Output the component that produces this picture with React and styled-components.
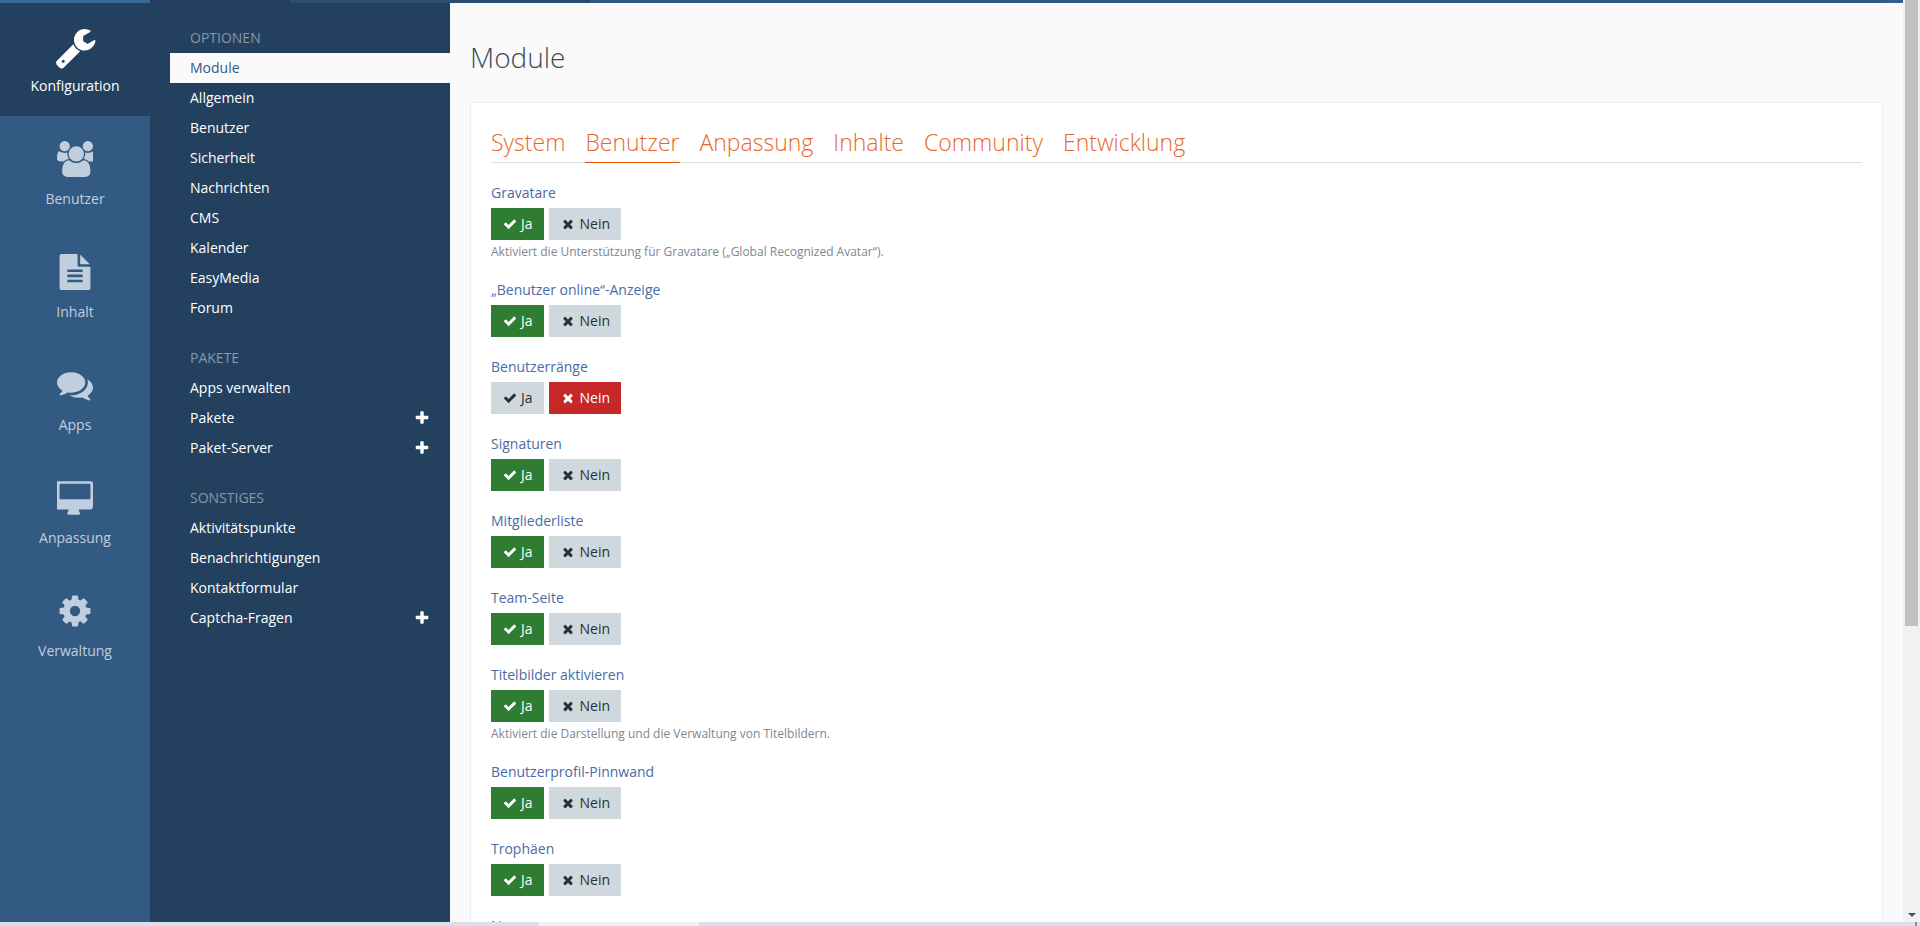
import React from 'react';
import styled, { createGlobalStyle } from 'styled-components';

const icons = {
  wrench:
    'M448 1472q0-26-19-45t-45-19-45 19-19 45 19 45 45 19 45-19 19-45zm644-420l-682 682q-37 37-90 37-52 0-91-37l-106-108q-38-36-38-90 0-53 38-91l681-681q39 98 114.5 173.5t173.5 114.5zm634-435q0 39-23 106-47 134-164.5 217.5t-258.5 83.5q-185 0-316.5-131.5t-131.5-316.5 131.5-316.5 316.5-131.5q58 0 121.5 16.5t107.5 46.5q16 11 16 28t-16 28l-293 169v224l193 107q5-3 79-48.5t135.5-81 70.5-35.5q15 0 23.5 10t8.5 25z',
  users:
    'M593 896q-162 5-265 128h-134q-82 0-138-40.5t-56-118.5q0-353 124-353 6 0 43.5 21t97.5 42.5 119 21.5q67 0 133-23-5 37-5 66 0 139 81 256zm1071 637q0 120-73 189.5t-194 69.5h-874q-121 0-194-69.5t-73-189.5q0-53 3.5-103.5t14-109 26.5-108.5 43-97.5 62-81 85.5-53.5 111.5-20q10 0 43 21.5t73 48 107 48 135 21.5 135-21.5 107-48 73-48 43-21.5q61 0 111.5 20t85.5 53.5 62 81 43 97.5 26.5 108.5 14 109 3.5 103.5zm-1024-1277q0 106-75 181t-181 75-181-75-75-181 75-181 181-75 181 75 75 181zm704 384q0 159-112.5 271.5t-271.5 112.5-271.5-112.5-112.5-271.5 112.5-271.5 271.5-112.5 271.5 112.5 112.5 271.5zm576 225q0 78-56 118.5t-138 40.5h-134q-103-123-265-128 81-117 81-256 0-29-5-66 66 23 133 23 59 0 119-21.5t97.5-42.5 43.5-21q124 0 124 353zm-128-609q0 106-75 181t-181 75-181-75-75-181 75-181 181-75 181 75 75 181z',
  file:
    'M1596 476q14 14 28 36h-472v-472q22 14 36 28zm-476 164h544v1056q0 40-28 68t-68 28h-1344q-40 0-68-28t-28-68v-1600q0-40 28-68t68-28h800v544q0 40 28 68t68 28zm160 736v-64q0-14-9-23t-23-9h-704q-14 0-23 9t-9 23v64q0 14 9 23t23 9h704q14 0 23-9t9-23zm0-256v-64q0-14-9-23t-23-9h-704q-14 0-23 9t-9 23v64q0 14 9 23t23 9h704q14 0 23-9t9-23zm0-256v-64q0-14-9-23t-23-9h-704q-14 0-23 9t-9 23v64q0 14 9 23t23 9h704q14 0 23-9t9-23z',
  comments:
    'M1408 768q0 139-94 257t-256.5 186.5-353.5 68.5q-86 0-176-16-124 88-278 128-36 9-86 16h-3q-11 0-20.5-8t-11.5-21q-1-3-1-6.5t.5-6.5 2-6l2.5-5 3.5-5.5 4-5 4.5-5 4-4.5q5-6 23-25t26-29.5 22.5-29 25-38.5 20.5-44q-124-72-195-177t-71-224q0-139 94-257t256.5-186.5 353.5-68.5 353.5 68.5 256.5 186.5 94 257zm384 256q0 120-71 224.5t-195 176.5q10 24 20.5 44t25 38.5 22.5 29 26 29.5 23 25q1 1 4 4.5t4.5 5 4 5 3.5 5.5l2.5 5 2 6 .5 6.5-1 6.5q-3 14-13 22t-22 7q-50-7-86-16-154-40-278-128-90 16-176 16-271 0-472-132 58 4 88 4 161 0 309-45t264-129q125-92 192-212t67-254q0-77-23-152 129 71 204 178t75 230z',
  desktop:
    'M1664 928v-704q0-13-9.5-22.5t-22.5-9.5h-1472q-13 0-22.5 9.5t-9.5 22.5v704q0 13 9.5 22.5t22.5 9.5h1472q13 0 22.5-9.5t9.5-22.5zm128-704v1088q0 66-47 113t-113 47h-544q0 37 16 77.5t32 71 16 43.5q0 26-19 45t-45 19h-512q-26 0-45-19t-19-45q0-14 16-44t32-70 16-78h-544q-66 0-113-47t-47-113v-1088q0-66 47-113t113-47h1632q66 0 113 47t47 113z',
  cog:
    'M1152 896q0-106-75-181t-181-75-181 75-75 181 75 181 181 75 181-75 75-181zm512-109v222q0 12-8 23t-20 13l-185 28q-19 54-39 91 35 50 107 138 10 12 10 25t-9 23q-27 37-99 108t-94 71q-12 0-26-9l-138-108q-44 23-91 38-16 136-29 186-7 28-36 28h-222q-14 0-24.5-8.5t-11.5-21.5l-28-184q-49-16-90-37l-141 107q-10 9-25 9-14 0-25-11-126-114-165-168-7-10-7-23 0-12 8-23 15-21 51-66.5t54-70.5q-27-50-41-99l-183-27q-13-2-21-12.5t-8-23.5v-222q0-12 8-23t19-13l186-28q14-46 39-92-40-57-107-138-10-12-10-24 0-10 9-23 26-36 98.5-107.5t94.5-71.5q13 0 26 10l138 107q44-23 91-38 16-136 29-186 7-28 36-28h222q14 0 24.5 8.5t11.5 21.5l28 184q49 16 90 37l142-107q9-9 24-9 13 0 25 10 129 119 165 170 7 8 7 22 0 12-8 23-15 21-51 66.5t-54 70.5q26 50 41 98l183 28q13 2 21 12.5t8 23.5z',
  check:
    'M1671 566q0 40-28 68l-724 724-136 136q-28 28-68 28t-68-28l-136-136-362-362q-28-28-28-68t28-68l136-136q28-28 68-28t68 28l294 295 656-657q28-28 68-28t68 28l136 136q28 28 28 68z',
  times:
    'M1490 1322q0 40-28 68l-136 136q-28 28-68 28t-68-28l-294-294-294 294q-28 28-68 28t-68-28l-136-136q-28-28-28-68t28-68l294-294-294-294q-28-28-28-68t28-68l136-136q28-28 68-28t68 28l294 294 294-294q28-28 68-28t68 28l136 136q28 28 28 68t-28 68l-294 294 294 294q28 28 28 68z',
  plus:
    'M1600 736v192q0 40-28 68t-68 28h-416v416q0 40-28 68t-68 28h-192q-40 0-68-28t-28-68v-416h-416q-40 0-68-28t-28-68v-192q0-40 28-68t68-28h416v-416q0-40 28-68t68-28h192q40 0 68 28t28 68v416h416q40 0 68 28t28 68z',
};

const Icon = ({ name, size }) => (
  <svg width={size} height={size} viewBox="0 0 1792 1792" fill="currentColor">
    <path d={icons[name]} />
  </svg>
);

const mainNav = [
  { label: 'Konfiguration', icon: 'wrench', active: true },
  { label: 'Benutzer', icon: 'users' },
  { label: 'Inhalt', icon: 'file' },
  { label: 'Apps', icon: 'comments' },
  { label: 'Anpassung', icon: 'desktop' },
  { label: 'Verwaltung', icon: 'cog' },
];

const subNav = [
  {
    title: 'OPTIONEN',
    items: [
      { label: 'Module', active: true },
      { label: 'Allgemein' },
      { label: 'Benutzer' },
      { label: 'Sicherheit' },
      { label: 'Nachrichten' },
      { label: 'CMS' },
      { label: 'Kalender' },
      { label: 'EasyMedia' },
      { label: 'Forum' },
    ],
  },
  {
    title: 'PAKETE',
    items: [
      { label: 'Apps verwalten' },
      { label: 'Pakete', add: true },
      { label: 'Paket-Server', add: true },
    ],
  },
  {
    title: 'SONSTIGES',
    items: [
      { label: 'Aktivitätspunkte' },
      { label: 'Benachrichtigungen' },
      { label: 'Kontaktformular' },
      { label: 'Captcha-Fragen', add: true },
    ],
  },
];

const tabs = ['System', 'Benutzer', 'Anpassung', 'Inhalte', 'Community', 'Entwicklung'];

const options = [
  { label: 'Gravatare', on: true, help: 'Aktiviert die Unterstützung für Gravatare („Global Recognized Avatar“).' },
  { label: '„Benutzer online“-Anzeige', on: true },
  { label: 'Benutzerränge', on: false },
  { label: 'Signaturen', on: true },
  { label: 'Mitgliederliste', on: true },
  { label: 'Team-Seite', on: true },
  { label: 'Titelbilder aktivieren', on: true, help: 'Aktiviert die Darstellung und die Verwaltung von Titelbildern.' },
  { label: 'Benutzerprofil-Pinnwand', on: true },
  { label: 'Trophäen', on: true },
  { label: 'Namen', on: true },
];

const App = () => (
  <>
    <GlobalStyle />
    <Page>
      <Main>
        <Viewport>
          <TopStrip>
            <StripPart $width={150} $color="#3a6a98" />
            <StripPart $width={140} $color="#254060" />
            <StripPart $width={160} $color="#2b4e72" />
            <StripPart $width={140} $color="#264d72" />
            <StripPart $grow $color="#2f5a82" />
            <StripPart $width={20} $color="#335f8e" />
          </TopStrip>
          <Panels>
            <MainNav>
              {mainNav.map((item) => (
                <MainNavItem key={item.label} $active={item.active}>
                  <MainNavIcon $active={item.active}>
                    <Icon name={item.icon} size={item.active ? 43 : 36} />
                  </MainNavIcon>
                  {item.label}
                </MainNavItem>
              ))}
            </MainNav>

            <SubNav>
              {subNav.map((section) => (
                <SubSection key={section.title}>
                  <SubTitle>{section.title}</SubTitle>
                  {section.items.map((item) => (
                    <SubItem key={item.label} $active={item.active}>
                      {item.label}
                      {item.add && <Icon name="plus" size={16} />}
                    </SubItem>
                  ))}
                </SubSection>
              ))}
            </SubNav>

            <Content>
              <PageTitle>Module</PageTitle>
              <Card>
                <TabBar>
                  {tabs.map((tab) => (
                    <Tab key={tab} $active={tab === 'Benutzer'}>
                      {tab}
                    </Tab>
                  ))}
                </TabBar>
                {options.map((option) => (
                  <Option key={option.label}>
                    <OptionLabel>{option.label}</OptionLabel>
                    <Toggle>
                      <YesButton $variant={option.on ? 'yes' : 'off'}>
                        <Icon name="check" size={14} />
                        Ja
                      </YesButton>
                      <NoButton $variant={option.on ? 'off' : 'no'}>
                        <Icon name="times" size={14} />
                        Nein
                      </NoButton>
                    </Toggle>
                    {option.help && <Help>{option.help}</Help>}
                  </Option>
                ))}
              </Card>
            </Content>
          </Panels>
        </Viewport>
        <Scrollbar>
          <ScrollThumb />
          <ScrollArrow />
        </Scrollbar>
      </Main>
      <BottomStrip>
        <BottomPart $width={539} $color="#d9dfee" />
        <BottomPart $width={160} $color="#eef0f8" />
        <BottomPart $width={1216} $color="#d9dfee" />
        <BottomPart $width={2} $color="#8a8f9c" />
        <BottomPart $width={3} $color="#d9dfee" />
      </BottomStrip>
    </Page>
  </>
);

const GlobalStyle = createGlobalStyle`
  html, body {
    margin: 0;
    padding: 0;
    height: 100%;
    overflow: hidden;
  }
  body {
    font-family: "Open Sans", "Liberation Sans", sans-serif;
    font-size: 14px;
  }
`;

const Page = styled.div`
  display: flex;
  flex-direction: column;
  height: 926px;
  overflow: hidden;
`;

const Main = styled.div`
  display: flex;
  flex: 1;
  min-height: 0;
`;

const Viewport = styled.div`
  display: flex;
  flex-direction: column;
  flex: 1;
  min-width: 0;
`;

const TopStrip = styled.div`
  display: flex;
  height: 3px;
  flex-shrink: 0;
`;

const StripPart = styled.div`
  width: ${(p) => (p.$width ? `${p.$width}px` : 'auto')};
  flex: ${(p) => (p.$grow ? 1 : 'none')};
  background: ${(p) => p.$color};
`;

const Panels = styled.div`
  display: flex;
  flex: 1;
  min-height: 0;
`;

const MainNav = styled.nav`
  width: 150px;
  flex-shrink: 0;
  background: #335a82;
`;

const MainNavItem = styled.div`
  display: flex;
  flex-direction: column;
  align-items: center;
  height: 113px;
  padding-top: ${(p) => (p.$active ? '23px' : '25px')};
  box-sizing: border-box;
  line-height: 20px;
  background: ${(p) => (p.$active ? '#24405f' : 'transparent')};
  color: ${(p) => (p.$active ? '#fff' : '#c0cedd')};
`;

const MainNavIcon = styled.div`
  display: flex;
  justify-content: center;
  margin-bottom: ${(p) => (p.$active ? '7px' : '12px')};
  svg {
    display: block;
  }
`;

const SubNav = styled.nav`
  width: 300px;
  flex-shrink: 0;
  box-sizing: border-box;
  padding: 20px 0 0 20px;
  background: #24405f;
`;

const SubSection = styled.div`
  margin-bottom: 20px;
`;

const SubTitle = styled.div`
  height: 30px;
  padding-left: 20px;
  line-height: 30px;
  color: #8797aa;
`;

const SubItem = styled.div`
  display: flex;
  align-items: center;
  justify-content: space-between;
  height: 30px;
  padding: 0 20px;
  line-height: 30px;
  background: ${(p) => (p.$active ? '#fafafa' : 'transparent')};
  color: ${(p) => (p.$active ? '#335a82' : '#fff')};
`;

const Content = styled.main`
  flex: 1;
  min-width: 0;
  padding: 0 20px;
  overflow: hidden;
  background: #fafafa;
`;

const PageTitle = styled.h1`
  margin: 34px 0 24px;
  font-family: "Open Sans Light", "Open Sans", sans-serif;
  font-size: 28px;
  font-weight: 300;
  line-height: 41px;
  color: #3c4d56;
`;

const Card = styled.section`
  padding: 20px;
  border: 1px solid #e8eff5;
  background: #fff;
`;

const TabBar = styled.div`
  display: flex;
  gap: 20px;
  margin-bottom: 20px;
  border-bottom: 1px solid #e0e0e0;
`;

const Tab = styled.div`
  margin-bottom: -1px;
  padding: 1px 0 1px;
  font-family: "Open Sans Light", "Open Sans", sans-serif;
  font-size: 23px;
  font-weight: 300;
  line-height: 37px;
  color: #e8662a;
  border-bottom: 1px solid ${(p) => (p.$active ? '#e65100' : 'transparent')};
`;

const Option = styled.div`
  margin-bottom: 20px;
`;

const OptionLabel = styled.div`
  margin-bottom: 5px;
  line-height: 20px;
  color: #4a6ba5;
`;

const Toggle = styled.div`
  display: flex;
  gap: 5px;
`;

const toggleColors = {
  yes: 'background: #2e7d32; color: #fff;',
  no: 'background: #c62828; color: #fff;',
  off: 'background: #cfd8dc; color: #263238;',
};

const YesButton = styled.div`
  display: flex;
  align-items: center;
  gap: 4px;
  height: 32px;
  padding: 0 11px 0 12px;
  line-height: 30px;
  ${(p) => toggleColors[p.$variant]}
`;

const NoButton = styled(YesButton)`
  gap: 5px;
  padding: 0 11px 0 12px;
`;

const Help = styled.div`
  margin-top: 3px;
  font-size: 12px;
  line-height: 17px;
  color: #7d8790;
`;

const Scrollbar = styled.div`
  position: relative;
  width: 17px;
  flex-shrink: 0;
  background: #f1f1f1;
`;

const ScrollThumb = styled.div`
  width: 13px;
  height: 626px;
  margin-left: 2px;
  background: #c1c1c1;
`;

const ScrollArrow = styled.div`
  position: absolute;
  bottom: 5px;
  left: 5px;
  width: 0;
  height: 0;
  border-left: 4px solid transparent;
  border-right: 4px solid transparent;
  border-top: 4px solid #505050;
`;

const BottomStrip = styled.div`
  display: flex;
  height: 4px;
  flex-shrink: 0;
`;

const BottomPart = styled.div`
  width: ${(p) => p.$width}px;
  background: ${(p) => p.$color};
`;

export default App;
